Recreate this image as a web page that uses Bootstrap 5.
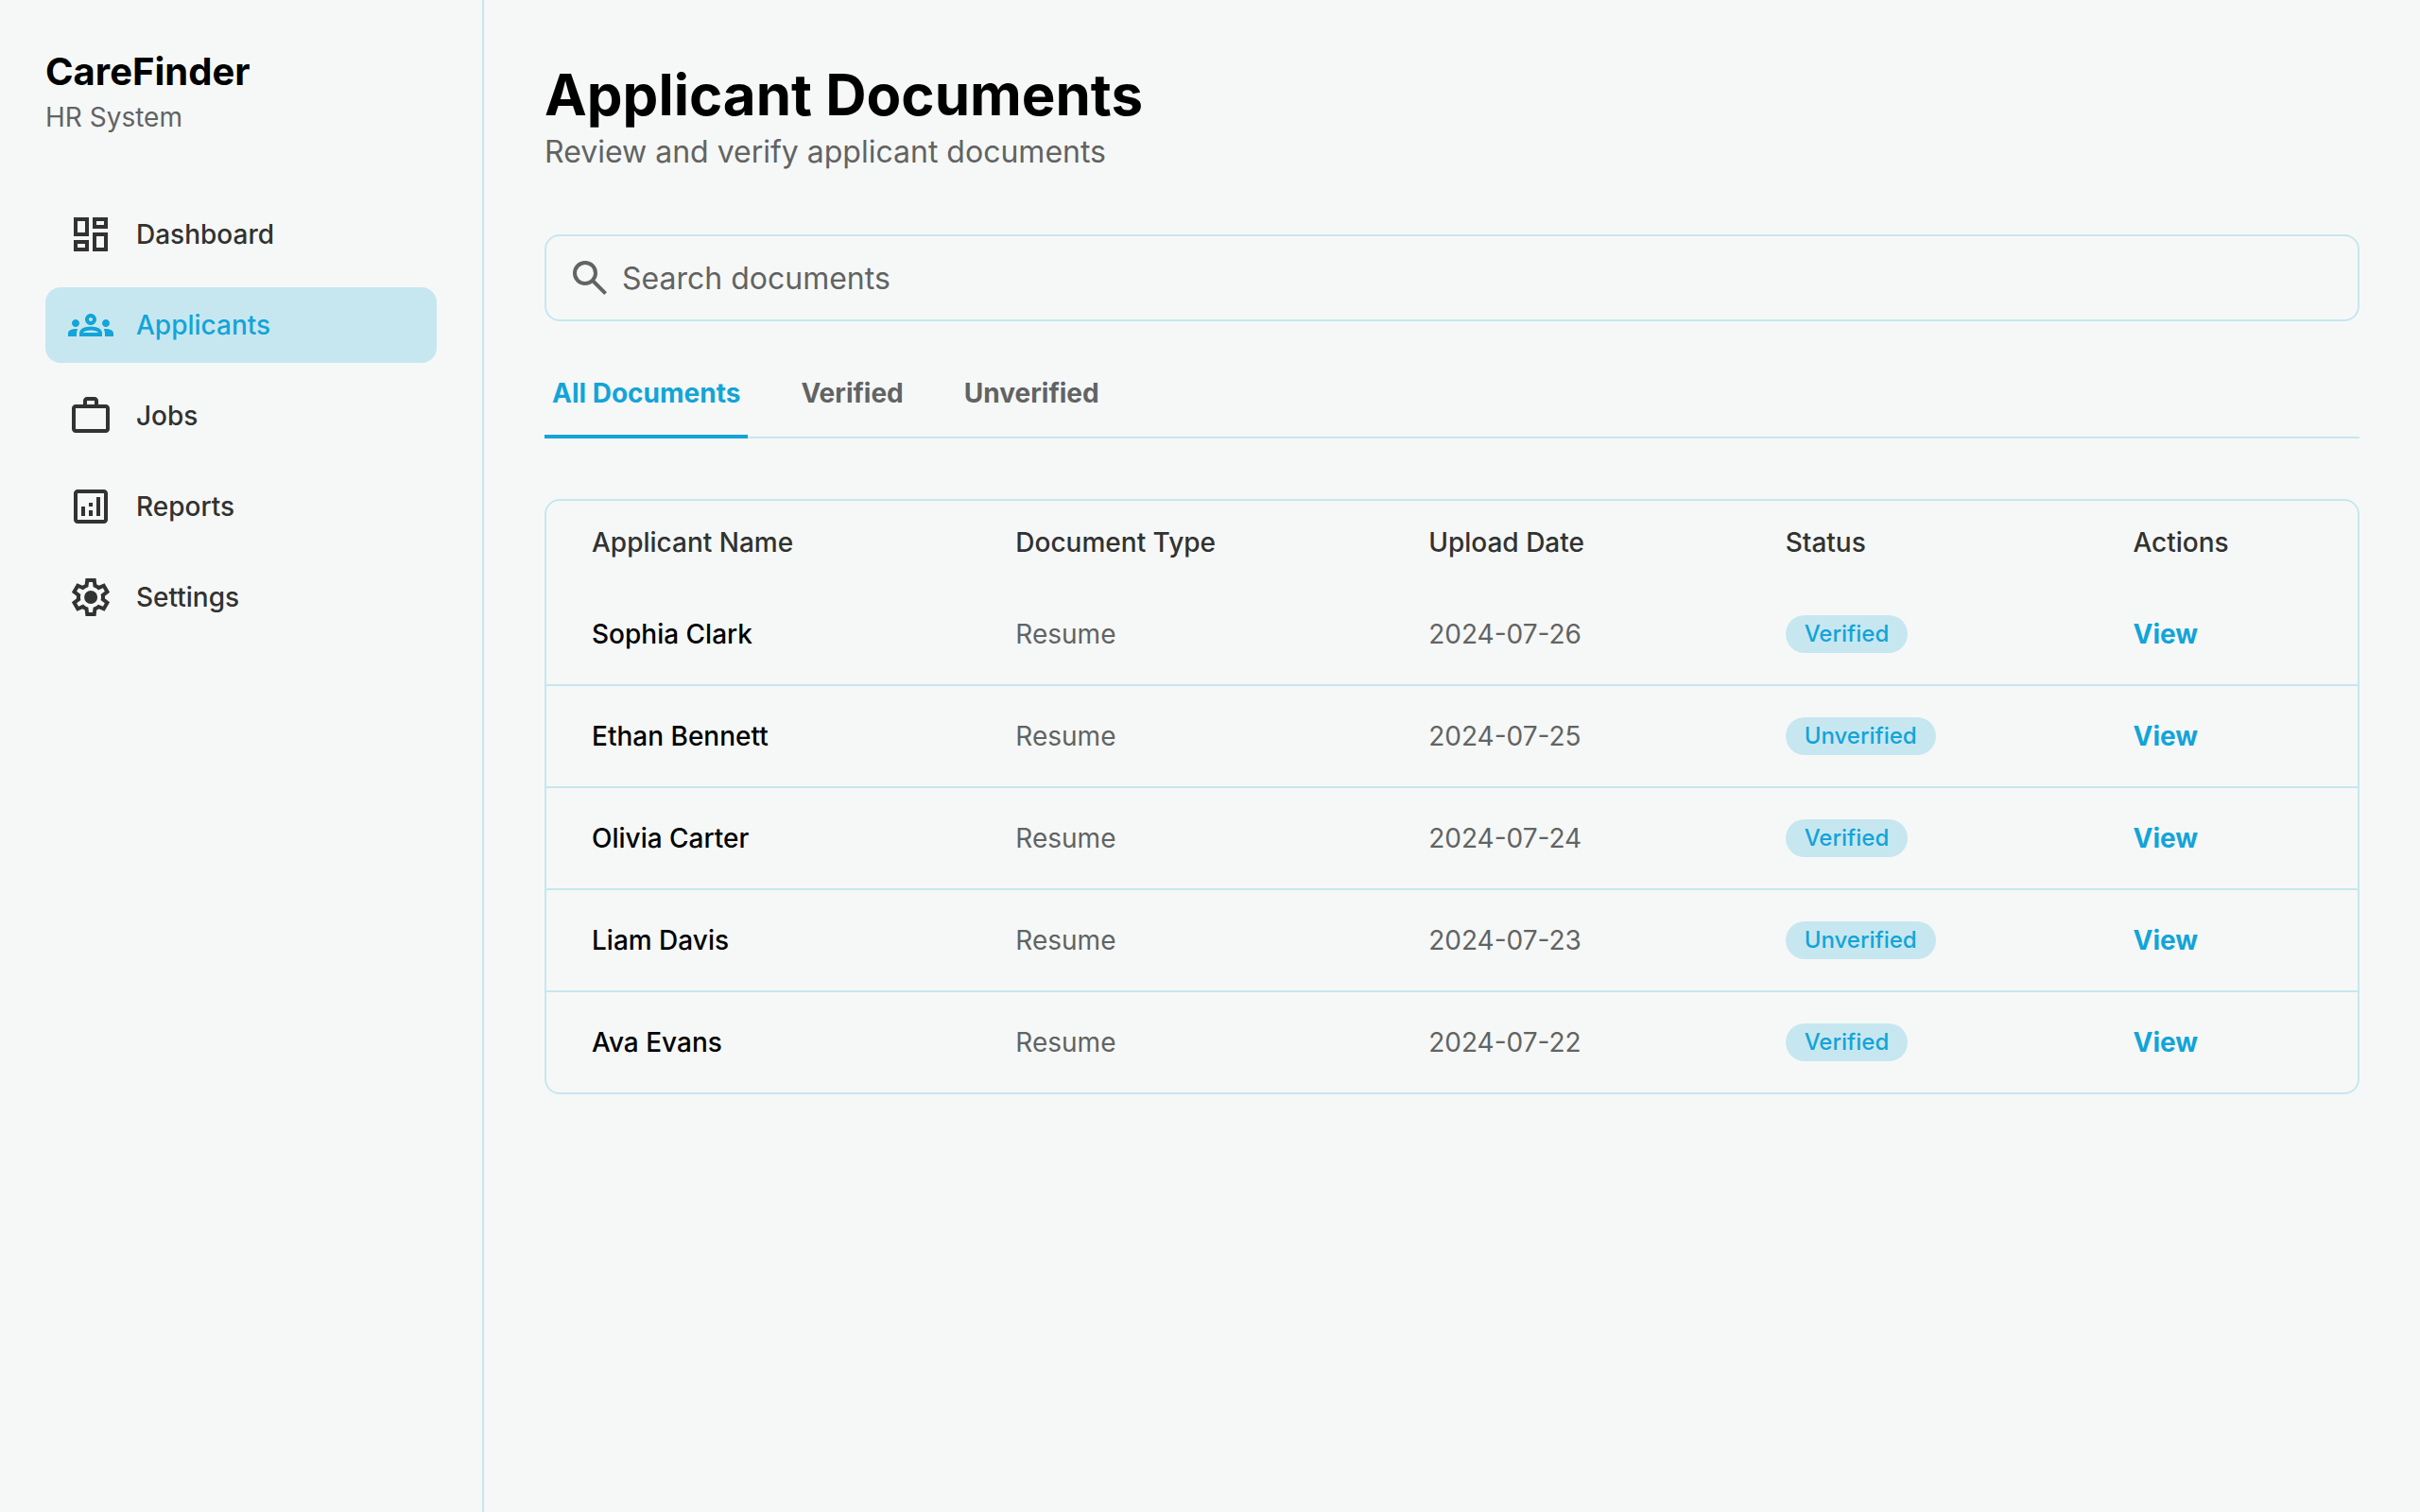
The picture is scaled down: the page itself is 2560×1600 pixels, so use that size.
<!DOCTYPE html>
<html lang="en">
<head>
<meta charset="utf-8">
<meta name="viewport" content="width=device-width, initial-scale=1">
<title>CareFinder – Applicant Documents</title>
<link rel="stylesheet" href="https://cdn.jsdelivr.net/npm/bootstrap@5.3.0/dist/css/bootstrap.min.css">
<style>
  :root { --accent: #13a4d8; --tint: #c7e7f0; --page: #f6f8f7; --ink: #313231; --muted: #626363; }
  body { background: var(--page); color: #000; font-family: Inter, "Liberation Sans", sans-serif; font-size: 28px; line-height: 40px; }
  .sidebar { width: 512px; padding: 48px; border-right: 2px solid var(--tint); }
  .brand { font-size: 40px; line-height: 56px; }
  .text-soft { color: var(--muted); }
  .side-nav { margin-top: 64px; gap: 16px; }
  .side-nav .nav-link { display: flex; align-items: center; gap: 24px; height: 80px; padding: 0 24px; border-radius: 16px; color: var(--ink); font-weight: 500; }
  .side-nav .nav-link.active { background: var(--tint); color: var(--accent); }
  .glyph { width: 48px; height: 48px; flex: none; fill: currentColor; }
  .content { padding: 64px; min-width: 0; }
  .page-title { font-size: 60px; line-height: 72px; }
  .page-sub { font-size: 32px; line-height: 50px; }
  .search { margin-top: 62px; }
  .search-icon { position: absolute; left: 24px; top: 22px; display: flex; color: var(--muted); }
  .search .form-control { height: 92px; padding: 0 24px 0 80px; border: 2px solid var(--tint); border-radius: 16px; background: transparent; font-size: 32px; color: #000; }
  .search .form-control::placeholder { color: var(--muted); opacity: 1; }
  .doc-tabs { margin-top: 48px; gap: 48px; border-bottom: 2px solid var(--tint); }
  .doc-tabs .nav-link { margin-bottom: -2px; padding: 8px 8px 24px; border: 0; border-bottom: 4px solid transparent; border-radius: 0; background: none; color: var(--muted); font-weight: 700; }
  .doc-tabs .nav-link.active { color: var(--accent); background: none; border-bottom-color: var(--accent); }
  .doc-panel { margin-top: 64px; border: 2px solid var(--tint); border-radius: 16px; overflow: hidden; }
  .doc-table { border-collapse: separate; border-spacing: 0; table-layout: fixed; }
  .w-name { width: 23.4%; }
  .w-type { width: 22.8%; }
  .w-date { width: 19.7%; }
  .w-status { width: 19.2%; }
  .doc-table th, .doc-table td { border: 0; text-align: left; vertical-align: middle; }
  .doc-table thead th { padding: 24px 48px; font-weight: 500; color: var(--ink); }
  .doc-table tbody th, .doc-table tbody td { height: 108px; padding: 32px 48px; border-bottom: 2px solid var(--tint); color: var(--muted); }
  .doc-table tbody tr:last-child > * { height: 106px; border-bottom: 0; }
  .doc-table tbody th { font-weight: 500; color: #000; }
  .doc-table td a { color: var(--accent); }
  .status { display: block; width: fit-content; padding: 4px 20px; font-size: 24px; line-height: 32px; font-weight: 500; background: var(--tint); color: var(--accent); }
</style>
</head>
<body>
<div class="d-flex min-vh-100">
  <aside class="sidebar flex-shrink-0">
    <div class="brand fw-bold">CareFinder</div>
    <div class="text-soft">HR System</div>
    <nav class="side-nav nav flex-column" aria-label="Main">
      <a class="nav-link" href="#">
        <svg class="glyph" viewBox="0 0 24 24" aria-hidden="true"><path d="M19 5v2h-4V5h4M9 5v6H5V5h4m10 8v6h-4v-6h4M9 17v2H5v-2h4M21 3h-8v6h8V3zM11 3H3v10h8V3zm10 8h-8v10h8V11zm-10 4H3v6h8v-6z"/></svg>
        Dashboard</a>
      <a class="nav-link active" href="#" aria-current="page">
        <svg class="glyph" viewBox="0 0 24 24" aria-hidden="true"><path d="M4 13c1.1 0 2-.9 2-2s-.9-2-2-2-2 .9-2 2 .9 2 2 2zm1.13 1.1c-.37-.06-.74-.1-1.13-.1-.99 0-1.93.21-2.78.58C.48 14.9 0 15.62 0 16.43V18h4.5v-1.61c0-.83.23-1.61.63-2.29zM20 13c1.1 0 2-.9 2-2s-.9-2-2-2-2 .9-2 2 .9 2 2 2zm4 3.43c0-.81-.48-1.53-1.22-1.85-.85-.37-1.79-.58-2.78-.58-.39 0-.76.04-1.13.1.4.68.63 1.46.63 2.29V18H24v-1.57zm-7.76-2.78c-1.17-.52-2.61-.9-4.24-.9-1.63 0-3.07.39-4.24.9C6.68 14.13 6 15.21 6 16.39V18h12v-1.61c0-1.18-.68-2.26-1.76-2.74zM8.07 16c.09-.23.13-.39.91-.69.97-.38 1.99-.56 3.02-.56s2.05.18 3.02.56c.77.3.81.46.91.69H8.07zM12 8c.55 0 1 .45 1 1s-.45 1-1 1-1-.45-1-1 .45-1 1-1m0-2c-1.66 0-3 1.34-3 3s1.34 3 3 3 3-1.34 3-3-1.34-3-3-3z"/></svg>
        Applicants</a>
      <a class="nav-link" href="#">
        <svg class="glyph" viewBox="0 0 24 24" aria-hidden="true"><path fill-rule="evenodd" d="M4 21q-.825 0-1.413-.588T2 19V8q0-.825.588-1.413T4 6h4V4q0-.825.588-1.413T10 2h4q.825 0 1.413.588T16 4v2h4q.825 0 1.413.588T22 8v11q0 .825-.588 1.413T20 21H4Zm0-2h16V8H4v11Zm6-13h4V4h-4v2Z"/></svg>
        Jobs</a>
      <a class="nav-link" href="#">
        <svg class="glyph" viewBox="0 0 24 24" aria-hidden="true"><path fill-rule="evenodd" d="M7 12h2v5H7zM15 7h2v10h-2zM11 14h2v3h-2zM11 10h2v2h-2zM5 21q-.825 0-1.413-.588T3 19V5q0-.825.588-1.413T5 3h14q.825 0 1.413.588T21 5v14q0 .825-.588 1.413T19 21H5Zm0-2h14V5H5v14Z"/></svg>
        Reports</a>
      <a class="nav-link" href="#">
        <svg class="glyph" viewBox="0 0 24 24" aria-hidden="true"><path fill-rule="evenodd" d="M9.25 22l-.4-3.2q-.325-.125-.613-.3t-.562-.375L4.7 19.375l-2.75-4.75 2.575-1.95Q4.5 12.5 4.5 12.337v-.675q0-.162.025-.337L1.95 9.375l2.75-4.75 2.975 1.25q.275-.2.575-.375t.6-.3l.4-3.2h5.5l.4 3.2q.325.125.613.3t.562.375l2.975-1.25 2.75 4.75-2.575 1.95q.025.175.025.338v.674q0 .163-.05.338l2.575 1.95-2.75 4.75-2.95-1.25q-.275.2-.575.375t-.6.3l-.4 3.2h-5.5ZM11 20h1.975l.35-2.65q.775-.2 1.438-.588t1.212-.937l2.475 1.025.975-1.7-2.15-1.625q.125-.35.175-.737T17.5 12q0-.4-.05-.787t-.175-.738l2.15-1.625-.975-1.7-2.475 1.05q-.55-.575-1.213-.963t-1.437-.587L13 4h-1.975l-.35 2.65q-.775.2-1.437.588t-1.213.937L5.55 7.15l-.975 1.7 2.15 1.6q-.125.375-.175.75t-.05.8q0 .4.05.775t.175.75l-2.15 1.625.975 1.7 2.475-1.05q.55.575 1.213.963t1.437.587L11 20Zm1.05-4.5q1.45 0 2.475-1.025T15.55 12q0-1.45-1.025-2.475T12.05 8.5q-1.475 0-2.488 1.025T8.55 12q0 1.45 1.012 2.475T12.05 15.5Z"/></svg>
        Settings</a>
    </nav>
  </aside>

  <main class="content flex-grow-1">
    <h1 class="page-title fw-bold mb-0">Applicant Documents</h1>
    <p class="page-sub text-soft mb-0">Review and verify applicant documents</p>

    <form class="search position-relative" role="search">
      <label class="search-icon" for="doc-search">
        <svg class="glyph" viewBox="0 0 24 24" role="img" aria-label="Search documents"><path fill-rule="evenodd" d="M19.6 21l-6.3-6.3q-.75.6-1.725.95T9.5 16q-2.725 0-4.612-1.888T3 9.5q0-2.725 1.888-4.612T9.5 3q2.725 0 4.612 1.888T16 9.5q0 1.1-.35 2.075T14.7 13.3l6.3 6.3-1.4 1.4ZM9.5 14q1.875 0 3.188-1.313T14 9.5q0-1.875-1.313-3.188T9.5 5Q7.625 5 6.312 6.313T5 9.5q0 1.875 1.313 3.188T9.5 14Z"/></svg>
      </label>
      <input class="form-control" id="doc-search" type="search" placeholder="Search documents">
    </form>

    <div class="doc-tabs nav" role="tablist">
      <button class="nav-link active" type="button" role="tab" aria-selected="true">All Documents</button>
      <button class="nav-link" type="button" role="tab" aria-selected="false">Verified</button>
      <button class="nav-link" type="button" role="tab" aria-selected="false">Unverified</button>
    </div>

    <div class="doc-panel">
      <table class="doc-table w-100">
        <thead>
          <tr><th class="w-name" scope="col">Applicant Name</th><th class="w-type" scope="col">Document Type</th><th class="w-date" scope="col">Upload Date</th><th class="w-status" scope="col">Status</th><th scope="col">Actions</th></tr>
        </thead>
        <tbody>
          <tr><th scope="row">Sophia Clark</th><td>Resume</td><td>2024-07-26</td><td><span class="status rounded-pill">Verified</span></td><td><a class="fw-bold text-decoration-none" href="#">View</a></td></tr>
          <tr><th scope="row">Ethan Bennett</th><td>Resume</td><td>2024-07-25</td><td><span class="status rounded-pill">Unverified</span></td><td><a class="fw-bold text-decoration-none" href="#">View</a></td></tr>
          <tr><th scope="row">Olivia Carter</th><td>Resume</td><td>2024-07-24</td><td><span class="status rounded-pill">Verified</span></td><td><a class="fw-bold text-decoration-none" href="#">View</a></td></tr>
          <tr><th scope="row">Liam Davis</th><td>Resume</td><td>2024-07-23</td><td><span class="status rounded-pill">Unverified</span></td><td><a class="fw-bold text-decoration-none" href="#">View</a></td></tr>
          <tr><th scope="row">Ava Evans</th><td>Resume</td><td>2024-07-22</td><td><span class="status rounded-pill">Verified</span></td><td><a class="fw-bold text-decoration-none" href="#">View</a></td></tr>
        </tbody>
      </table>
    </div>
  </main>
</div>
<script src="https://cdn.jsdelivr.net/npm/bootstrap@5.3.0/dist/js/bootstrap.bundle.min.js"></script>
</body>
</html>
